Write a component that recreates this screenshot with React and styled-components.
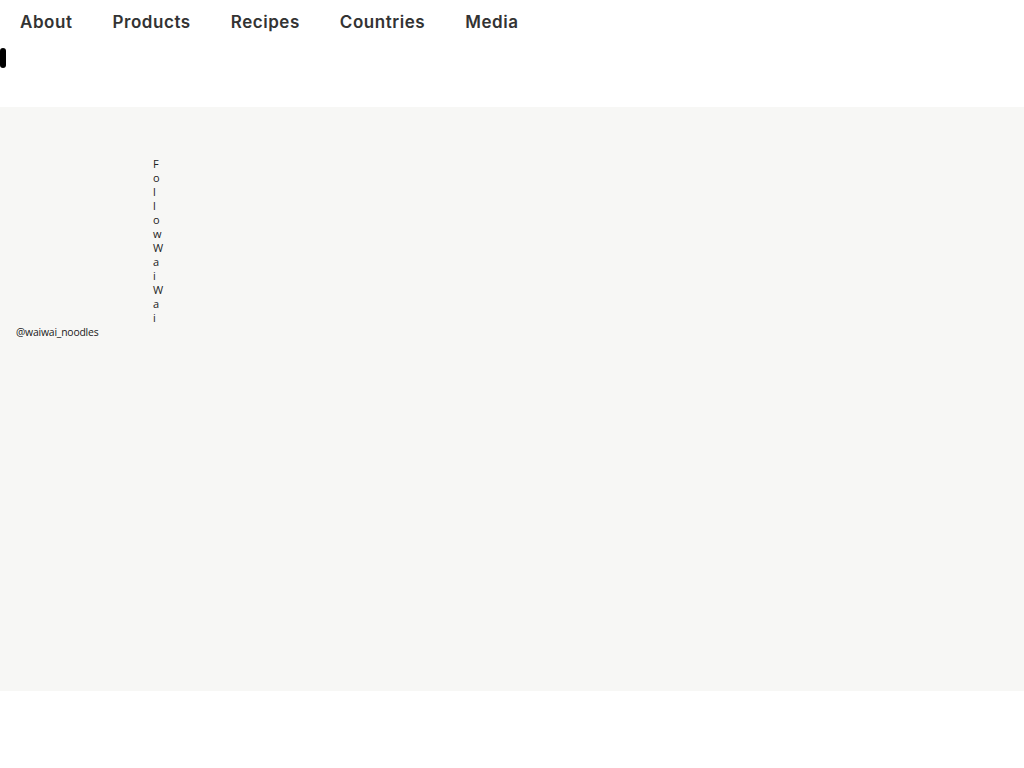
import React from 'react';
import styled, { createGlobalStyle } from 'styled-components'

const GlobalStyle = createGlobalStyle`
    body{
        margin:0;
        background:#ffffff;
        font-family:"Open Sans", "Noto Sans", sans-serif;
    }
`

const Header = styled.header`
    height:107px;
    background:#ffffff;
`

const Nav = styled.nav`
    display:flex;
    padding-top:9px;
`

const NavLink = styled.a`
    padding:0 20px;
    font-family:"Inter", "Noto Sans", sans-serif;
    font-weight:600;
    font-size:17px;
    line-height:26px;
    letter-spacing:0.55px;
    color:#333333;
    text-decoration:none;
    cursor:pointer;
`

const Toggle = styled.div`
    width:6px;
    height:20px;
    margin-top:13px;
    border-radius:3px;
    background:#000000;
`

const Feed = styled.section`
    height:584px;
    box-sizing:border-box;
    padding-top:50px;
    background:#f7f7f5;
`

const VerticalTitle = styled.h3`
    margin:0 0 0 153px;
    width:0;
    word-break:break-all;
    font-size:11px;
    font-weight:400;
    line-height:14px;
    color:#222222;
`

const Handle = styled.p`
    margin:0;
    padding-left:16px;
    font-size:10.4px;
    line-height:14px;
    letter-spacing:-0.2px;
    color:#1a1a1a;
`

const links = ['About','Products','Recipes','Countries','Media']

const App =()=>{
    return(
        <>
            <GlobalStyle/>
            <Header>
                <Nav>
                    {links.map((l)=>(
                        <NavLink key={l}>{l}</NavLink>
                    ))}
                </Nav>
                <Toggle/>
            </Header>
            <Feed>
                <VerticalTitle>FollowWaiWai</VerticalTitle>
                <Handle>@waiwai_noodles</Handle>
            </Feed>
        </>
    )
}

export default App
